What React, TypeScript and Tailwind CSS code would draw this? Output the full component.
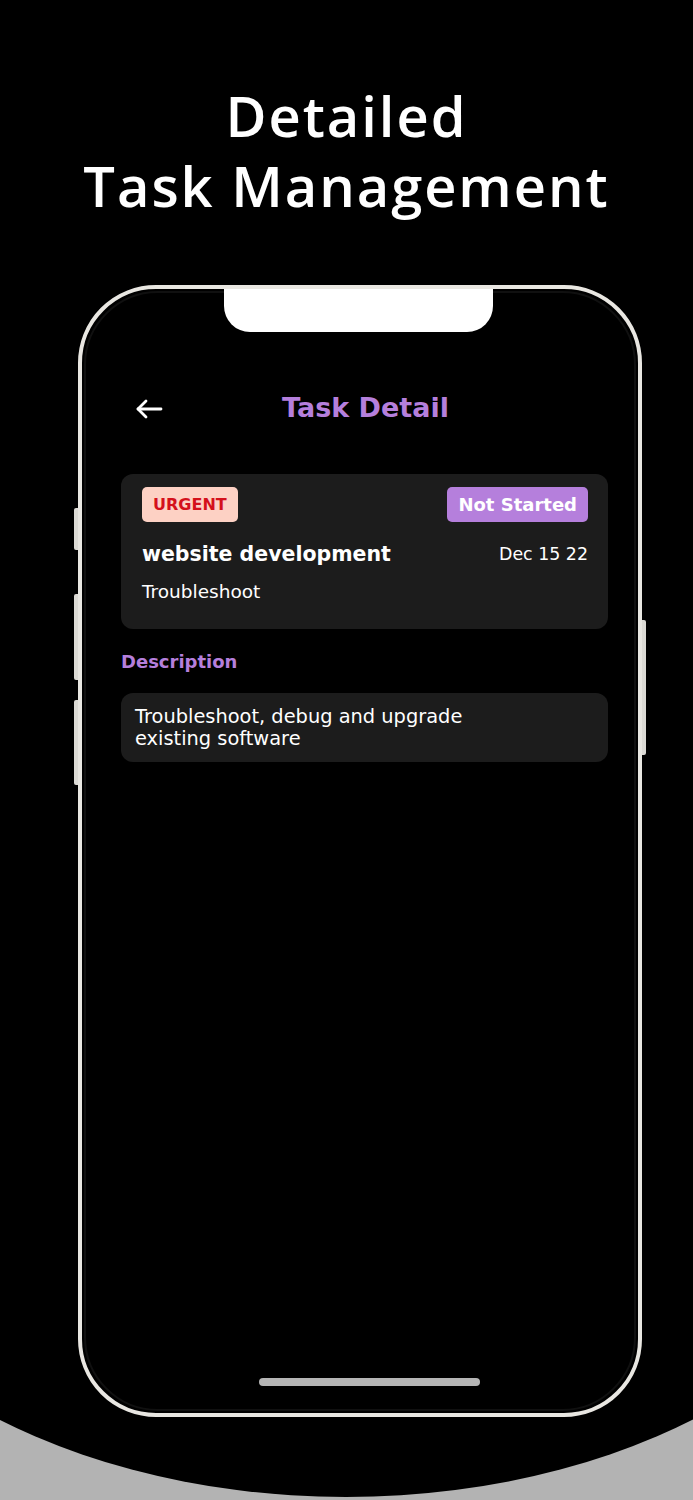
import React from "react";

const appFont = { fontFamily: "'DejaVu Sans', 'Noto Sans', sans-serif" };

export default function App() {
  return (
    <div className="relative w-[693px] h-[1500px] bg-black overflow-hidden">
      {/* bottom curve (background decoration) */}
      <div className="absolute left-0 bottom-0 w-full h-[90px] bg-[#b3b3b3] overflow-hidden">
        <div className="absolute left-[-214px] bottom-[3px] w-[1120px] h-[720px] rounded-[50%] bg-black" />
      </div>

      {/* title */}
      <div
        className="relative pt-[80px] text-center text-white font-semibold text-[56px] leading-[70px] tracking-[0.035em]"
        style={{ fontFamily: "'Open Sans', sans-serif" }}
      >
        <div>Detailed</div>
        <div>Task Management</div>
      </div>

      {/* phone */}
      <div className="relative ml-[78px] mt-[65px] w-[564px] h-[1132px]">
        {/* side buttons */}
        <div className="absolute left-[-4px] top-[223px] w-[5px] h-[42px] rounded-l-[2px] bg-[#dcdad5]" />
        <div className="absolute left-[-4px] top-[309px] w-[5px] h-[86px] rounded-l-[2px] bg-[#dcdad5]" />
        <div className="absolute left-[-4px] top-[415px] w-[5px] h-[85px] rounded-l-[2px] bg-[#dcdad5]" />
        <div className="absolute right-[-4px] top-[335px] w-[5px] h-[135px] rounded-r-[2px] bg-[#dcdad5]" />

        <div className="relative w-full h-full rounded-[78px] border-[4px] border-[#e9e7e2] bg-black overflow-hidden">
          <div className="absolute inset-[2px] rounded-[74px] border-[2px] border-[#101010]" />
          {/* notch */}
          <div className="absolute left-[142px] top-0 w-[269px] h-[43px] bg-white rounded-b-[26px]" />

          <div className="relative flex flex-col h-full pl-[39px] pt-[99px] pb-[27px]" style={appFont}>
            {/* header */}
            <div className="relative w-[487px] h-[40px] flex items-center justify-center">
              <svg
                className="absolute left-[14px] top-[10px]"
                width="28"
                height="22"
                viewBox="0 0 28 22"
                fill="none"
                stroke="white"
                strokeWidth="2.8"
                strokeLinecap="round"
                strokeLinejoin="round"
              >
                <path d="M26 11H3" />
                <path d="M11 3L3 11L11 19" />
              </svg>
              <span className="ml-[2px] text-[27px] font-bold text-[#b57fdc]">Task Detail</span>
            </div>

            {/* task card */}
            <div className="mt-[46px] w-[487px] h-[155px] rounded-[12px] bg-[#1c1c1c] pt-[13px] pl-[21px] pr-[20px]">
              <div className="flex items-center justify-between">
                <span className="h-[35px] px-[11px] flex items-center rounded-[5px] bg-[#fdd1c4] text-[#d4101b] text-[16px] font-bold">
                  URGENT
                </span>
                <span className="h-[35px] px-[11px] flex items-center rounded-[5px] bg-[#b57fdc] text-white text-[18px] font-bold">
                  Not Started
                </span>
              </div>
              <div className="mt-[20px] flex items-center justify-between h-[24px]">
                <span className="text-white text-[20.5px] font-bold">website development</span>
                <span className="text-white text-[17.4px]">Dec 15 22</span>
              </div>
              <div className="mt-[14px] h-[24px] flex items-center text-white text-[18.5px]">Troubleshoot</div>
            </div>

            {/* description */}
            <div className="mt-[20px] h-[24px] flex items-center text-[#b57fdc] text-[18px] font-bold">
              Description
            </div>
            <div className="mt-[20px] w-[487px] h-[69px] rounded-[12px] bg-[#1c1c1c] pl-[14px] pt-[13px] text-white text-[19.4px] leading-[22px]">
              <div>Troubleshoot, debug and upgrade</div>
              <div>existing software</div>
            </div>

            {/* home indicator */}
            <div className="mt-auto ml-[138px] w-[221px] h-[8px] rounded-full bg-[#b5b5b5]" />
          </div>
        </div>
      </div>
    </div>
  );
}
